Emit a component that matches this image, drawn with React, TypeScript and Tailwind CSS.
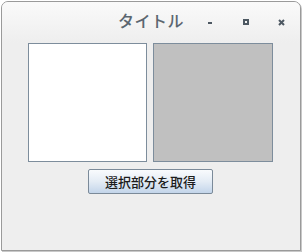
import React from "react";

export default function App() {
  return (
    <div className="w-[303px] h-[252px] bg-white pt-[1px] pl-[1px]">
      <div
        className="w-[300px] h-[250px] rounded-t-[7px] border border-[#9a9a9a] bg-[#eeeeee] flex flex-col shadow-[1px_1px_0_#c8c8c8]"
        style={{ fontFamily: '"Noto Sans CJK JP", "Noto Sans", sans-serif' }}
      >
        <div className="h-[41px] flex items-start rounded-t-[6px] bg-gradient-to-b from-[#fafafa] to-[#eeeeee]">
          <div className="ml-[116px] mt-[8px] text-[16px] leading-[20px] text-[#5b6670] font-medium tracking-[0.5px]">
            タイトル
          </div>
          <div className="ml-[24px] mt-[20px] w-[4px] h-[2px] bg-[#4d5862]" />
          <div className="ml-[31px] mt-[17px] w-[6px] h-[6px] border-2 border-[#4d5862]" />
          <svg className="ml-[29px] mt-[17px]" width="7" height="7" viewBox="0 0 7 7">
            <path d="M1 1 L6 6 M6 1 L1 6" stroke="#4d5862" strokeWidth="2" strokeLinecap="butt" />
          </svg>
        </div>
        <div className="flex gap-[6px] pl-[26px]">
          <div className="w-[119px] h-[119px] bg-white border border-[#7d8d9c]" />
          <div className="w-[120px] h-[119px] bg-[#c0c0c0] border border-[#7d8d9c]" />
        </div>
        <div className="flex pl-[86px] pt-[7px]">
          <button className="w-[125px] h-[25px] rounded-[2px] border border-[#7b8a99] bg-gradient-to-b from-[#f9fbfd] via-[#e4ecf5] to-[#c3d5ea] text-[13px] leading-[18px] text-[#1c1c1c] font-medium flex items-center justify-center">
            選択部分を取得
          </button>
        </div>
      </div>
    </div>
  );
}
